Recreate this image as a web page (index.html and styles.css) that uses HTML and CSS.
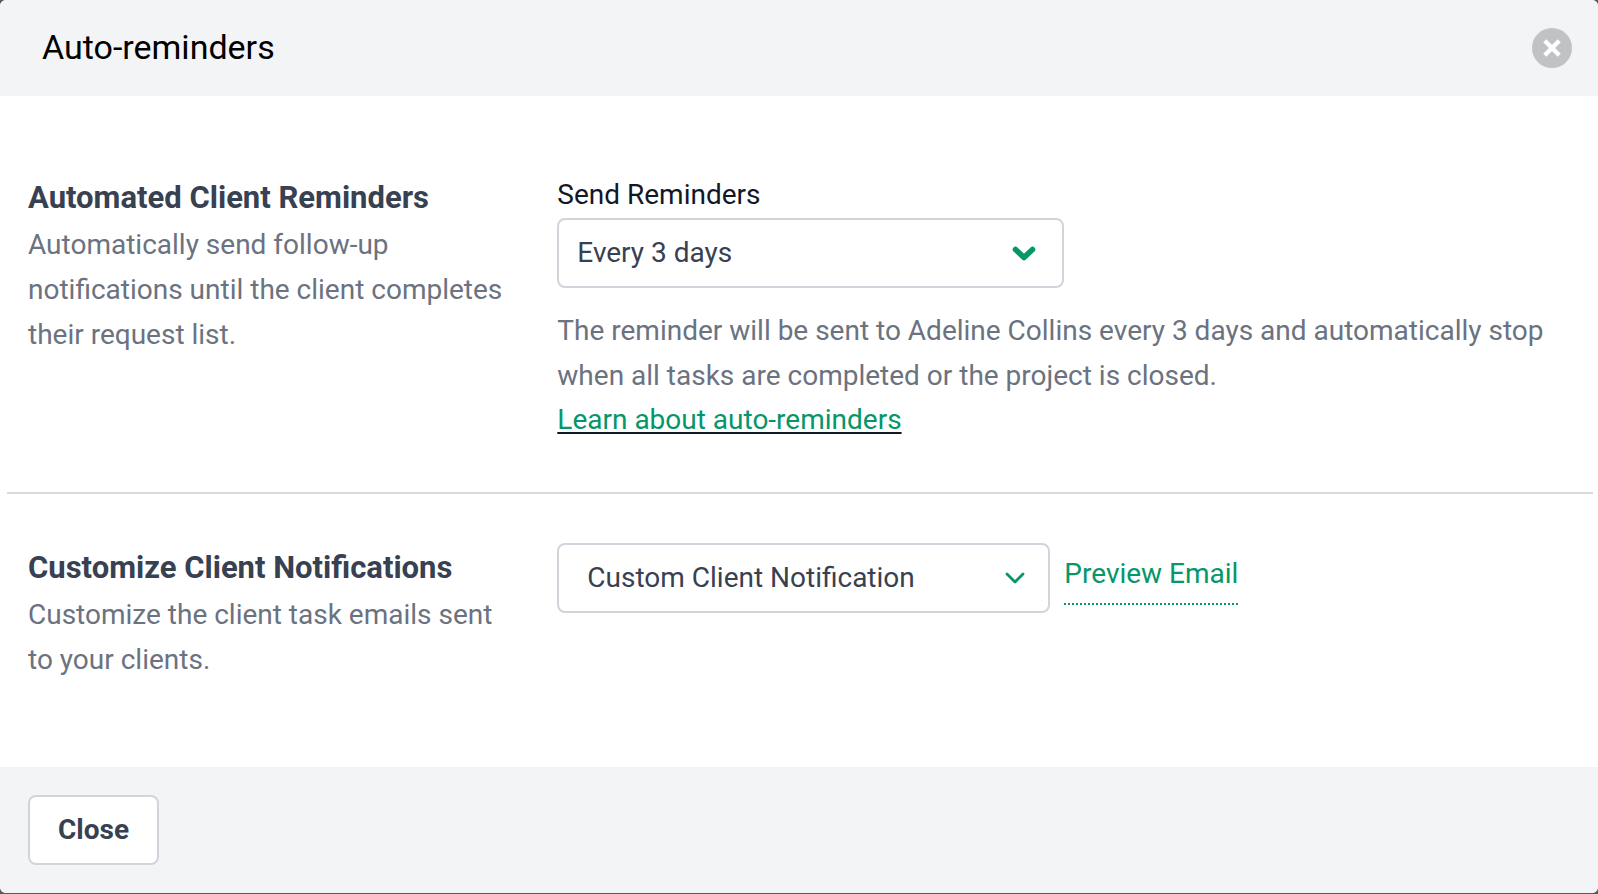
FILE: index.html
```html
<!DOCTYPE html>
<html lang="en">
<head>
<meta charset="utf-8">
<title>Auto-reminders</title>
<link rel="stylesheet" href="styles.css">
</head>
<body>
<div class="dialog" role="dialog" aria-labelledby="dialog-title">
  <header class="dialog-header">
    <h1 class="dialog-title" id="dialog-title">Auto-reminders</h1>
    <button class="dismiss" type="button" aria-label="Dismiss">
      <svg class="dismiss-icon" viewBox="0 0 40 40" aria-hidden="true">
        <circle cx="20" cy="20" r="20" fill="#c1c2c4"/>
        <path d="M12.8 12.8 27.2 27.2M27.2 12.8 12.8 27.2" stroke="#fff" stroke-width="4.4"/>
      </svg>
    </button>
  </header>

  <main class="dialog-body">
    <section class="section">
      <div class="about">
        <h2 class="section-title">Automated Client Reminders</h2>
        <p class="text">Automatically send follow-up notifications until the client completes their request list.</p>
      </div>
      <div class="settings">
        <label class="label" for="frequency">Send Reminders</label>
        <div class="select-wrap select-wrap-half">
          <select class="select" id="frequency">
            <option>Every 3 days</option>
          </select>
          <svg class="chevron chevron-bold" viewBox="0 0 24 18" aria-hidden="true">
            <path d="M3.5 5.5 12 13.5 20.5 5.5" fill="none" stroke="#059669" stroke-width="5.6" stroke-linecap="round" stroke-linejoin="round"/>
          </svg>
        </div>
        <p class="text hint">The reminder will be sent to Adeline Collins every 3 days and automatically stop when all tasks are completed or the project is closed.</p>
        <div class="learn"><a class="learn-link" href="#learn">Learn about auto-reminders</a></div>
      </div>
    </section>

    <hr class="divider">

    <section class="section section-notifications">
      <div class="about">
        <h2 class="section-title" id="notifications-title">Customize Client Notifications</h2>
        <p class="text">Customize the client task emails sent to your clients.</p>
      </div>
      <div class="settings notification-row">
        <div class="select-wrap select-wrap-fixed">
          <select class="select select-roomy" aria-labelledby="notifications-title">
            <option>Custom Client Notification</option>
          </select>
          <svg class="chevron chevron-thin" viewBox="0 0 20 12" aria-hidden="true">
            <path d="M2 2 10 10 18 2" fill="none" stroke="#059669" stroke-width="2.8" stroke-linecap="round" stroke-linejoin="round"/>
          </svg>
        </div>
        <a class="preview" href="#preview">Preview Email</a>
      </div>
    </section>
  </main>

  <footer class="dialog-footer">
    <button class="button" type="button">Close</button>
  </footer>
</div>
</body>
</html>
```
FILE: styles.css
```css
* {
  box-sizing: border-box;
}

body {
  margin: 0;
  padding-bottom: 1px;
  background: #5a5a5a;
  color: #111827;
  font-family: Roboto, "Liberation Sans", sans-serif;
  font-size: 28px;
  line-height: 45px;
}

.dialog {
  display: flex;
  flex-direction: column;
  min-height: calc(100vh - 1px);
  border-radius: 6px;
  background: #fff;
  overflow: hidden;
}

.dialog-header {
  display: flex;
  align-items: center;
  justify-content: space-between;
  padding: 24px 26px 24px 42px;
  background: #f3f4f6;
}

.dialog-title {
  margin: 0;
  padding-bottom: 2px;
  color: #000;
  font-size: 34px;
  font-weight: 400;
  line-height: 46px;
}

.dismiss {
  width: 40px;
  height: 40px;
  padding: 0;
  border: 0;
  border-radius: 50%;
  background: none;
}

.dismiss-icon {
  display: block;
  width: 100%;
}

.dialog-body {
  flex: 1;
}

.section {
  display: grid;
  grid-template-columns: minmax(0, 1fr) minmax(0, 2fr);
  column-gap: 23px;
  padding: 77px 28px 50px;
}

.section-notifications {
  padding-top: 49px;
}

.about {
  padding-right: 16px;
}

.section-title {
  margin: 0;
  color: #374151;
  font-size: 31px;
  font-weight: 700;
  line-height: 49px;
}

.text {
  margin: 0;
  color: #6b7280;
}

.label {
  display: block;
  margin-bottom: 1px;
  line-height: 44px;
}

.select-wrap {
  position: relative;
}

.select-wrap-half {
  width: 50%;
}

.select-wrap-fixed {
  width: 493px;
}

.select {
  display: block;
  width: 100%;
  height: 70px;
  padding: 0 64px 2px 18px;
  border: 2px solid #d1d5db;
  border-radius: 8px;
  background: #fff;
  color: #374151;
  font: inherit;
  appearance: none;
}

.select-roomy {
  padding-left: 28px;
}

.chevron {
  position: absolute;
  top: 0;
  bottom: 0;
  margin: auto 0;
  pointer-events: none;
}

.chevron-bold {
  right: 28px;
  width: 24px;
  height: 18px;
}

.chevron-thin {
  right: 25px;
  width: 20px;
  height: 12px;
}

.hint {
  margin-top: 20px;
}

.learn {
  line-height: 44px;
}

.learn-link {
  color: #059669;
  text-decoration: underline #111827 2px;
  text-underline-offset: 3px;
  text-decoration-skip-ink: none;
}

.divider {
  height: 2px;
  margin: 0 5px 0 7px;
  border: 0;
  background: #dadada;
}

.notification-row {
  display: flex;
  align-items: flex-start;
  gap: 14px;
}

.preview {
  margin-top: 8px;
  padding-bottom: 7px;
  border-bottom: 2px dotted #059669;
  color: #059669;
  text-decoration: none;
}

.dialog-footer {
  padding: 28px;
  background: #f3f4f6;
}

.button {
  display: block;
  height: 70px;
  padding: 0 28px 2px;
  border: 2px solid #d1d5db;
  border-radius: 8px;
  background: #fff;
  color: #374151;
  font: inherit;
  font-weight: 700;
}
```
